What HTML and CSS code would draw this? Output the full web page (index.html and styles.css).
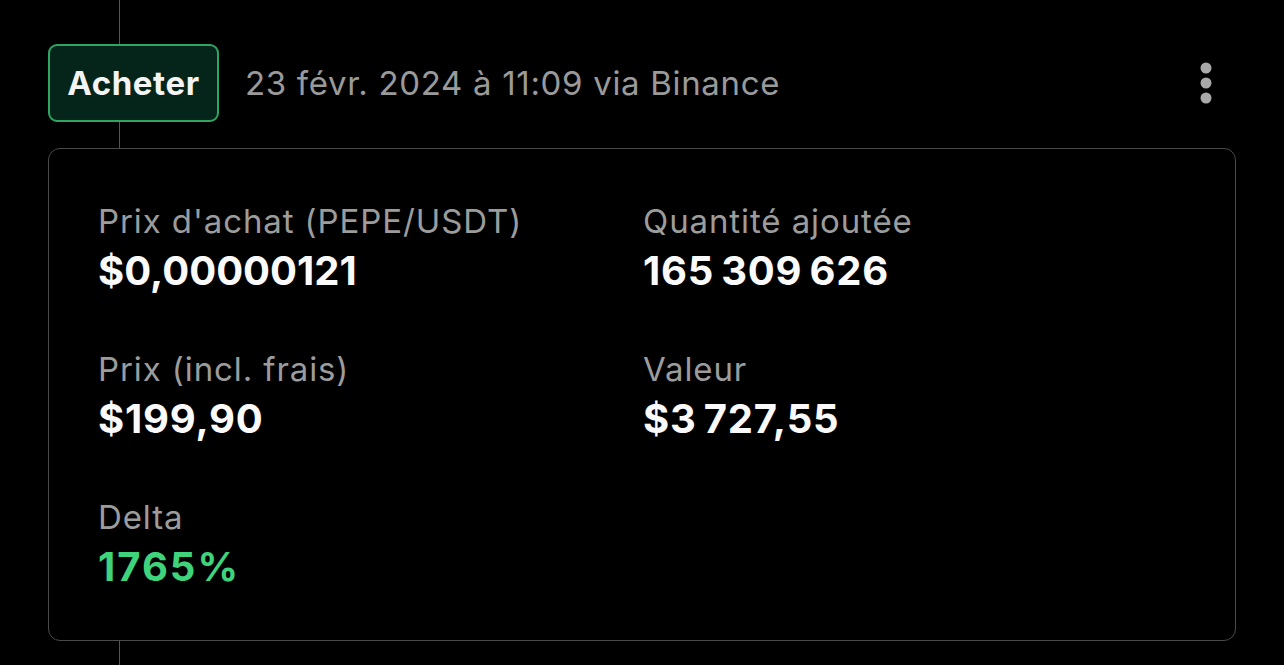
FILE: index.html
```html
<!DOCTYPE html>
<html lang="fr">
<head>
<meta charset="utf-8">
<link rel="stylesheet" href="styles.css">
</head>
<body>
<div class="page">
  <div class="rail"></div>
  <div class="header">
    <div class="badge">Acheter</div>
    <div class="meta">23 févr. 2024 à 11:09 via Binance</div>
    <div class="kebab" aria-label="menu">
      <svg width="14" height="42" viewBox="0 0 14 42">
        <circle cx="7" cy="6" r="5.5" fill="#a9a9a9"/>
        <circle cx="7" cy="21" r="5.5" fill="#a9a9a9"/>
        <circle cx="7" cy="36" r="5.5" fill="#a9a9a9"/>
      </svg>
    </div>
  </div>
  <div class="card">
    <div class="grid">
      <div class="field">
        <div class="label">Prix d'achat (PEPE/USDT)</div>
        <div class="value tight">$0,00000121</div>
      </div>
      <div class="field">
        <div class="label">Quantité ajoutée</div>
        <div class="value">165<span class="sp">&#8239;</span>309<span class="sp">&#8239;</span>626</div>
      </div>
      <div class="field">
        <div class="label">Prix (incl. frais)</div>
        <div class="value">$199,90</div>
      </div>
      <div class="field">
        <div class="label">Valeur</div>
        <div class="value">$3<span class="sp">&#8239;</span>727,55</div>
      </div>
      <div class="field">
        <div class="label">Delta</div>
        <div class="value green">1765%</div>
      </div>
    </div>
  </div>
</div>
</body>
</html>
```

FILE: styles.css
```css
html, body {
  margin: 0;
  padding: 0;
  background: #000;
}
body {
  font-family: Inter, "Liberation Sans", Arial, sans-serif;
  color: #fff;
  width: 1284px;
  height: 665px;
  overflow: hidden;
}
.page {
  position: relative;
  padding: 44px 48px 0 48px;
  height: 665px;
  box-sizing: border-box;
}
.rail {
  position: absolute;
  left: 119px;
  top: 0;
  bottom: 0;
  width: 1px;
  background: #555;
}
.header {
  position: relative;
  display: flex;
  align-items: center;
  height: 78px;
}
.badge {
  box-sizing: border-box;
  height: 78px;
  width: 171px;
  display: flex;
  align-items: center;
  justify-content: center;
  border: 2.5px solid #2fa564;
  border-radius: 9px;
  background: #05251a;
  font-size: 33px;
  font-weight: 700;
  letter-spacing: 0.6px;
  color: #f4f4f4;
}
.meta {
  margin-left: 26px;
  font-size: 33px;
  color: #9a9a9a;
  letter-spacing: 0.68px;
  flex: 1;
}
.kebab {
  width: 14px;
  height: 42px;
  margin-right: 23px;
  display: flex;
}
.card {
  position: relative;
  margin-top: 26px;
  height: 493px;
  box-sizing: border-box;
  border: 1px solid #4a4a4a;
  border-radius: 12px;
  background: #000;
  padding: 50px 50px 0 49px;
}
.grid {
  display: grid;
  grid-template-columns: 545px 1fr;
  row-gap: 50px;
}
.field {
  display: flex;
  flex-direction: column;
  gap: 2px;
}
.label {
  font-size: 33px;
  line-height: 44px;
  color: #9c9c9c;
  letter-spacing: 0.9px;
}
.value {
  font-size: 40px;
  line-height: 52px;
  font-weight: 700;
  color: #fafafa;
  letter-spacing: 0.8px;
}
.value.tight {
  letter-spacing: 0;
}
.value .sp {
  display: inline-block;
  width: 7px;
}
.value.green {
  color: #3fd47c;
  letter-spacing: 2px;
}
```
